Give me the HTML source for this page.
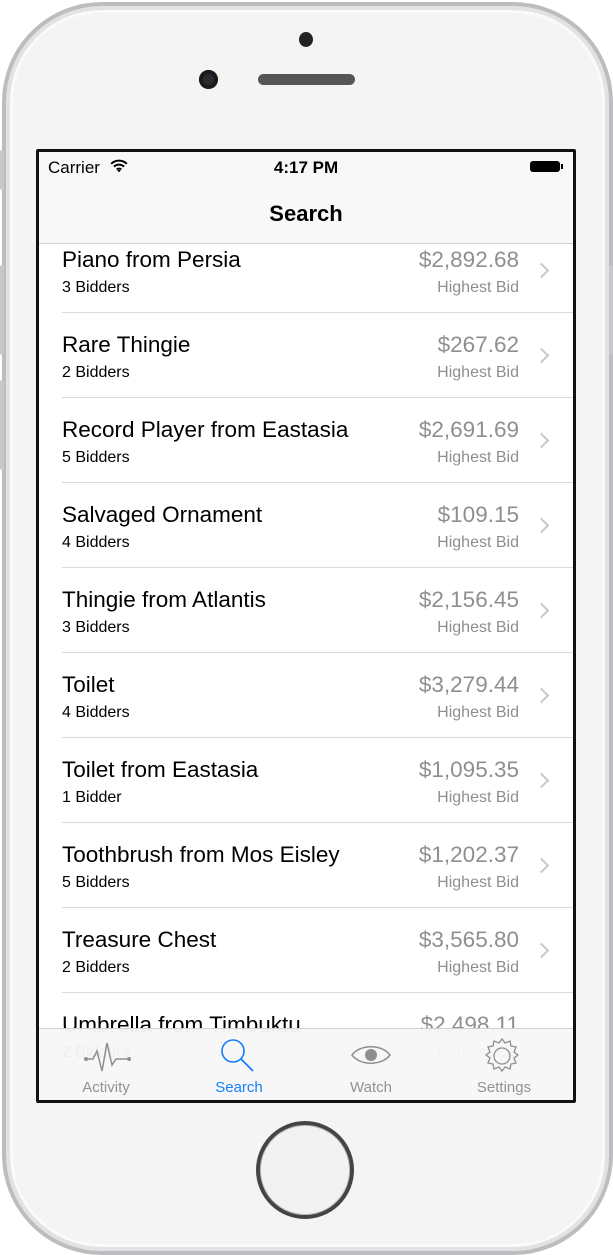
<!DOCTYPE html>
<html><head><style>
body{margin:0;width:613px;height:1255px;background:#fff;position:relative;overflow:hidden;font-family:"Liberation Sans",Arial,sans-serif}
.phone{position:absolute;left:2px;top:2px;width:603px;height:1245px;border-radius:100px;background:#f4f4f4;border:4px solid #bdbdc0;box-shadow:inset 0 0 0 4px #e2e2e4,inset 0 0 0 7px #fafafa}
.btn{position:absolute;background:#c8c8ca;width:4px;border-radius:2px}
.screen{position:absolute;left:36px;top:149px;width:534px;height:948px;border:3px solid #111;background:#fff;overflow:hidden;border-radius:2px}
.row{position:absolute;left:0;width:534px;height:85px}
.row .sep{position:absolute;left:23px;right:0;bottom:0;height:1px;background:#d9d9dc}
.t{position:absolute;left:23px;top:19px;font-size:22.5px;color:#000}
.s{position:absolute;left:23px;top:51px;font-size:16px;color:#000}
.p{position:absolute;right:54px;top:19px;font-size:22.5px;color:#8e8e93}
.h{position:absolute;right:54px;top:51px;font-size:16px;color:#8e8e93}
.chev{position:absolute;right:26px;top:37px;width:9px;height:9px;border-right:2px solid #c7c7cc;border-top:2px solid #c7c7cc;transform:rotate(45deg)}
.nav{position:absolute;left:0;top:0;width:534px;height:91px;background:rgba(248,248,248,.96);border-bottom:1px solid #cfcfd2}
.tab{position:absolute;left:0;top:876px;width:534px;height:72px;background:rgba(247,247,247,.96);border-top:1px solid #cfcfd2}
.tl{position:absolute;top:50px;font-size:15px;color:#929292;width:100px;text-align:center}
</style></head><body>
<div class="phone"></div>
<div class="btn" style="left:0;top:150px;height:40px"></div>
<div class="btn" style="left:0;top:265px;height:90px"></div>
<div class="btn" style="left:0;top:380px;height:90px"></div>
<div class="btn" style="left:609px;top:265px;height:90px"></div>
<div style="position:absolute;left:299px;top:32px;width:14px;height:15px;border-radius:50%;background:#222"></div>
<div style="position:absolute;left:199px;top:70px;width:19px;height:19px;border-radius:50%;background:#2a2a33;box-shadow:inset 0 0 0 4px #1a1a1a"></div>
<div style="position:absolute;left:258px;top:74px;width:97px;height:11px;border-radius:6px;background:#555"></div>
<div style="position:absolute;left:256px;top:1121px;width:90px;height:90px;border-radius:50%;border:4px solid #444;background:#f2f2f2;box-shadow:inset 0 0 0 1px #bbb"></div>
<div class="screen">
<div style="position:absolute;top:76px;left:0;width:534px">
<div class="row" style="top:0"><div class="t">Piano from Persia</div><div class="s">3 Bidders</div><div class="p">$2,892.68</div><div class="h">Highest Bid</div><div class="chev"></div><div class="sep"></div></div>
<div class="row" style="top:85px"><div class="t">Rare Thingie</div><div class="s">2 Bidders</div><div class="p">$267.62</div><div class="h">Highest Bid</div><div class="chev"></div><div class="sep"></div></div>
<div class="row" style="top:170px"><div class="t">Record Player from Eastasia</div><div class="s">5 Bidders</div><div class="p">$2,691.69</div><div class="h">Highest Bid</div><div class="chev"></div><div class="sep"></div></div>
<div class="row" style="top:255px"><div class="t">Salvaged Ornament</div><div class="s">4 Bidders</div><div class="p">$109.15</div><div class="h">Highest Bid</div><div class="chev"></div><div class="sep"></div></div>
<div class="row" style="top:340px"><div class="t">Thingie from Atlantis</div><div class="s">3 Bidders</div><div class="p">$2,156.45</div><div class="h">Highest Bid</div><div class="chev"></div><div class="sep"></div></div>
<div class="row" style="top:425px"><div class="t">Toilet</div><div class="s">4 Bidders</div><div class="p">$3,279.44</div><div class="h">Highest Bid</div><div class="chev"></div><div class="sep"></div></div>
<div class="row" style="top:510px"><div class="t">Toilet from Eastasia</div><div class="s">1 Bidder</div><div class="p">$1,095.35</div><div class="h">Highest Bid</div><div class="chev"></div><div class="sep"></div></div>
<div class="row" style="top:595px"><div class="t">Toothbrush from Mos Eisley</div><div class="s">5 Bidders</div><div class="p">$1,202.37</div><div class="h">Highest Bid</div><div class="chev"></div><div class="sep"></div></div>
<div class="row" style="top:680px"><div class="t">Treasure Chest</div><div class="s">2 Bidders</div><div class="p">$3,565.80</div><div class="h">Highest Bid</div><div class="chev"></div><div class="sep"></div></div>
<div class="row" style="top:765px"><div class="t">Umbrella from Timbuktu</div><div class="s">2 Bidders</div><div class="p">$2,498.11</div><div class="h">Highest Bid</div><div class="chev"></div><div class="sep"></div></div>
</div>
<div class="nav">
<div style="position:absolute;left:9px;top:6px;font-size:17px">Carrier</div>
<svg style="position:absolute;left:71px;top:6px" width="18" height="15" viewBox="0 0 16 13"><path d="M1 5a10 10 0 0 1 14 0M3.5 7.5a6.5 6.5 0 0 1 9 0M6 10a3 3 0 0 1 4 0" stroke="#000" stroke-width="1.8" fill="none"/><path d="M8 12.5l-1.5-1.5a2 2 0 0 1 3 0z" fill="#000"/></svg>
<div style="position:absolute;left:0;width:534px;top:6px;text-align:center;font-size:17px;font-weight:bold">4:17 PM</div>
<div style="position:absolute;left:491px;top:9px;width:30px;height:11px;background:#000;border-radius:3px"></div>
<div style="position:absolute;left:522px;top:12px;width:2px;height:5px;background:#000"></div>
<div style="position:absolute;left:0;width:534px;top:49px;text-align:center;font-size:22px;font-weight:bold">Search</div>
</div>
<div class="tab">
<svg style="position:absolute;left:44px;top:10px" width="50" height="34" viewBox="0 0 50 34"><path d="M3 20h7l4-8 5 20 5-28 5 22 4-6h11" stroke="#8e8e93" stroke-width="1.5" fill="none"/><circle cx="3" cy="20" r="2" fill="#8e8e93"/><circle cx="46" cy="20" r="2" fill="#8e8e93"/></svg>
<svg style="position:absolute;left:180px;top:8px" width="40" height="40" viewBox="0 0 40 40"><circle cx="14" cy="14" r="11" stroke="#157efb" stroke-width="1.6" fill="none"/><path d="M22 22l12 12" stroke="#157efb" stroke-width="1.8"/></svg>
<svg style="position:absolute;left:311px;top:13px" width="42" height="26" viewBox="0 0 42 26"><path d="M2 13C10 2 32 2 40 13C32 24 10 24 2 13z" stroke="#8e8e93" stroke-width="1.5" fill="none"/><circle cx="21" cy="13" r="6" fill="#8e8e93"/></svg>
<svg style="position:absolute;left:444px;top:8px" width="38" height="38" viewBox="0 0 38 38"><path d="M19 2l3 4 5-2 1 5 5 1-2 5 4 3-4 3 2 5-5 1-1 5-5-2-3 4-3-4-5 2-1-5-5-1 2-5-4-3 4-3-2-5 5-1 1-5 5 2z" stroke="#8e8e93" stroke-width="1.3" fill="none"/><circle cx="19" cy="19" r="8" stroke="#8e8e93" stroke-width="1.3" fill="none"/></svg>
<div class="tl" style="left:17px">Activity</div>
<div class="tl" style="left:150px;color:#157efb">Search</div>
<div class="tl" style="left:282px">Watch</div>
<div class="tl" style="left:415px">Settings</div>
</div>
</div>
</body></html>
